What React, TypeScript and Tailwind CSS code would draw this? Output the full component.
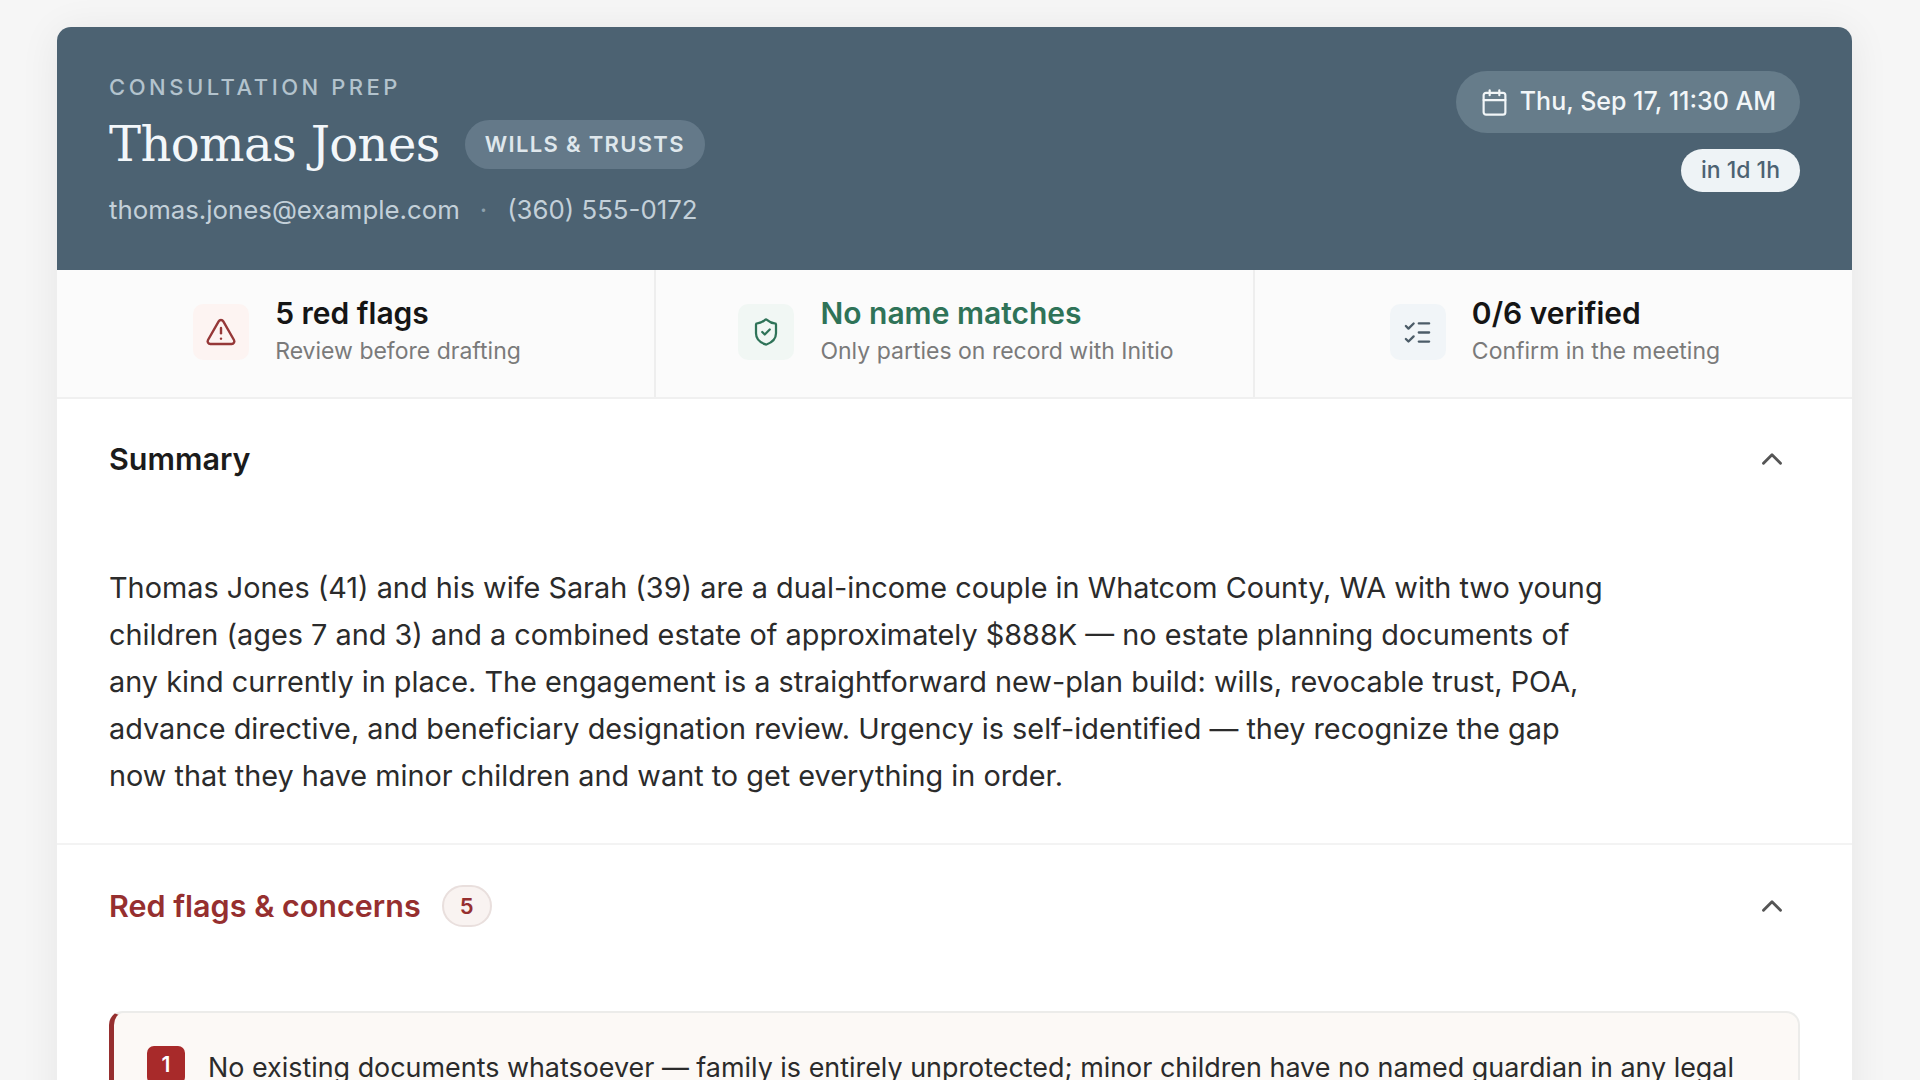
import { AlertTriangle, Calendar, ChevronUp, ListChecks, ShieldCheck } from "lucide-react";

const inter = "font-['Inter','Liberation_Sans',sans-serif]";

function Stat({ icon, tile, title, titleColor, sub, border }: { icon: React.ReactNode; tile: string; title: string; titleColor: string; sub: string; border: boolean }) {
  return (
    <div className={`flex flex-1 items-center justify-center gap-[26px] pb-[3px] pl-[3px] ${border ? "border-r-2 border-[#eeeeee]" : ""}`}>
      <div className={`flex h-[56px] w-[56px] items-center justify-center rounded-[10px] ${tile}`}>{icon}</div>
      <div className="flex flex-col">
        <span className={`text-[30px] leading-[38px] font-semibold ${titleColor}`}>{title}</span>
        <span className="text-[23px] leading-[38px] text-[#7a7a7a]">{sub}</span>
      </div>
    </div>
  );
}

export default function App() {
  return (
    <div className={`h-screen overflow-hidden bg-[#f6f6f6] pt-[27px] pl-[57px] ${inter}`}>
      <div className="w-[1795px] overflow-hidden rounded-t-[14px] bg-white shadow-[0_4px_40px_rgba(0,0,0,0.07)]">
        <header className="flex h-[243px] justify-between bg-[#4c6272] px-[52px] pt-[44px]">
          <div>
            <div className="mt-[1px] text-[22px] leading-[30px] font-medium tracking-[0.16em] text-[#b3c3cd]">CONSULTATION PREP</div>
            <div className="mt-[11px] flex items-center gap-[25px]">
              <h1 className="font-['DejaVu_Serif',serif] text-[48px] leading-[62px] tracking-[-0.6px] text-[#f3f7fa]">Thomas Jones</h1>
              <span className="rounded-full bg-[#647989] px-[20px] py-[8px] text-[22px] leading-[33px] font-semibold tracking-[0.06em] text-[#dfe7ec]">WILLS &amp; TRUSTS</span>
            </div>
            <div className="mt-[18px] flex items-center text-[25.8px] leading-[34px] text-[#c3d0d9]">
              <span>thomas.jones@example.com</span>
              <span className="mx-[20px] text-[#8da0ad]">·</span>
              <span>(360) 555-0172</span>
            </div>
          </div>
          <div className="flex flex-col items-end gap-[16px]">
            <div className="flex h-[62px] items-center gap-[11px] rounded-full bg-[#667c8a] px-[24px] text-[25px] font-medium text-[#f2f6f8]">
              <Calendar size={29} strokeWidth={1.8} />
              <span>Thu, Sep 17, 11:30 AM</span>
            </div>
            <div className="flex h-[43px] items-center rounded-full bg-[#eef3f6] px-[20px] text-[23px] font-medium text-[#4c6272]">in 1d 1h</div>
          </div>
        </header>
        <section className="flex h-[129px] border-b-2 border-[#f0f0f0] bg-[#fbfbfb]">
          <Stat border tile="bg-[#fdf4f2]" icon={<AlertTriangle size={32} strokeWidth={1.8} className="text-[#963838]" />} title="5 red flags" titleColor="text-[#151515]" sub="Review before drafting" />
          <Stat border tile="bg-[#f1f7f4]" icon={<ShieldCheck size={30} strokeWidth={1.8} className="text-[#2f7358]" />} title="No name matches" titleColor="text-[#2f7358]" sub="Only parties on record with Initio" />
          <Stat border={false} tile="bg-[#f1f5f8]" icon={<ListChecks size={31} strokeWidth={1.8} className="text-[#4c5c68]" />} title="0/6 verified" titleColor="text-[#151515]" sub="Confirm in the meeting" />
        </section>
        <section className="border-b-2 border-[#f3f3f3] px-[52px] pb-[44px]">
          <div className="flex h-[120px] items-center justify-between">
            <h2 className="text-[30.5px] font-semibold text-[#1b1b1b]">Summary</h2>
            <ChevronUp size={34} strokeWidth={2} className="mr-[11px] text-[#555555]" />
          </div>
          <p className="mt-[45px] max-w-[1505px] text-[28.85px] leading-[47px] text-[#2b2b2b]">
            Thomas Jones (41) and his wife Sarah (39) are a dual-income couple in Whatcom County, WA with two young children (ages 7 and 3) and a combined estate of approximately $888K — no estate planning documents of any kind currently in place. The engagement is a straightforward new-plan build: wills, revocable trust, POA, advance directive, and beneficiary designation review. Urgency is self-identified — they recognize the gap now that they have minor children and want to get everything in order.
          </p>
        </section>
        <section className="px-[52px]">
          <div className="flex h-[122px] items-center justify-between">
            <div className="flex items-center gap-[21px]">
              <h2 className="text-[30.5px] font-semibold text-[#962f2f]">Red flags &amp; concerns</h2>
              <span className="flex h-[42px] w-[50px] items-center justify-center rounded-full border-2 border-[#e9dfdd] bg-[#f9f3f1] text-[22px] font-semibold text-[#962f2f]">5</span>
            </div>
            <ChevronUp size={34} strokeWidth={2} className="mr-[11px] text-[#555555]" />
          </div>
          <div className="mt-[44px] flex h-[200px] gap-[23px] rounded-[14px] border-2 border-l-[5px] border-[#ececea] border-l-[#962f2f] bg-[#fcf9f6] px-[33px] pt-[33px]">
            <span className="flex h-[38px] w-[38px] shrink-0 items-center justify-center rounded-[7px] bg-[#a82a2a] text-[21px] font-semibold text-white">1</span>
            <p className="-mt-[2px] text-[26.9px] leading-[47px] text-[#2b2b2b]">No existing documents whatsoever — family is entirely unprotected; minor children have no named guardian in any legal</p>
          </div>
        </section>
      </div>
    </div>
  );
}
